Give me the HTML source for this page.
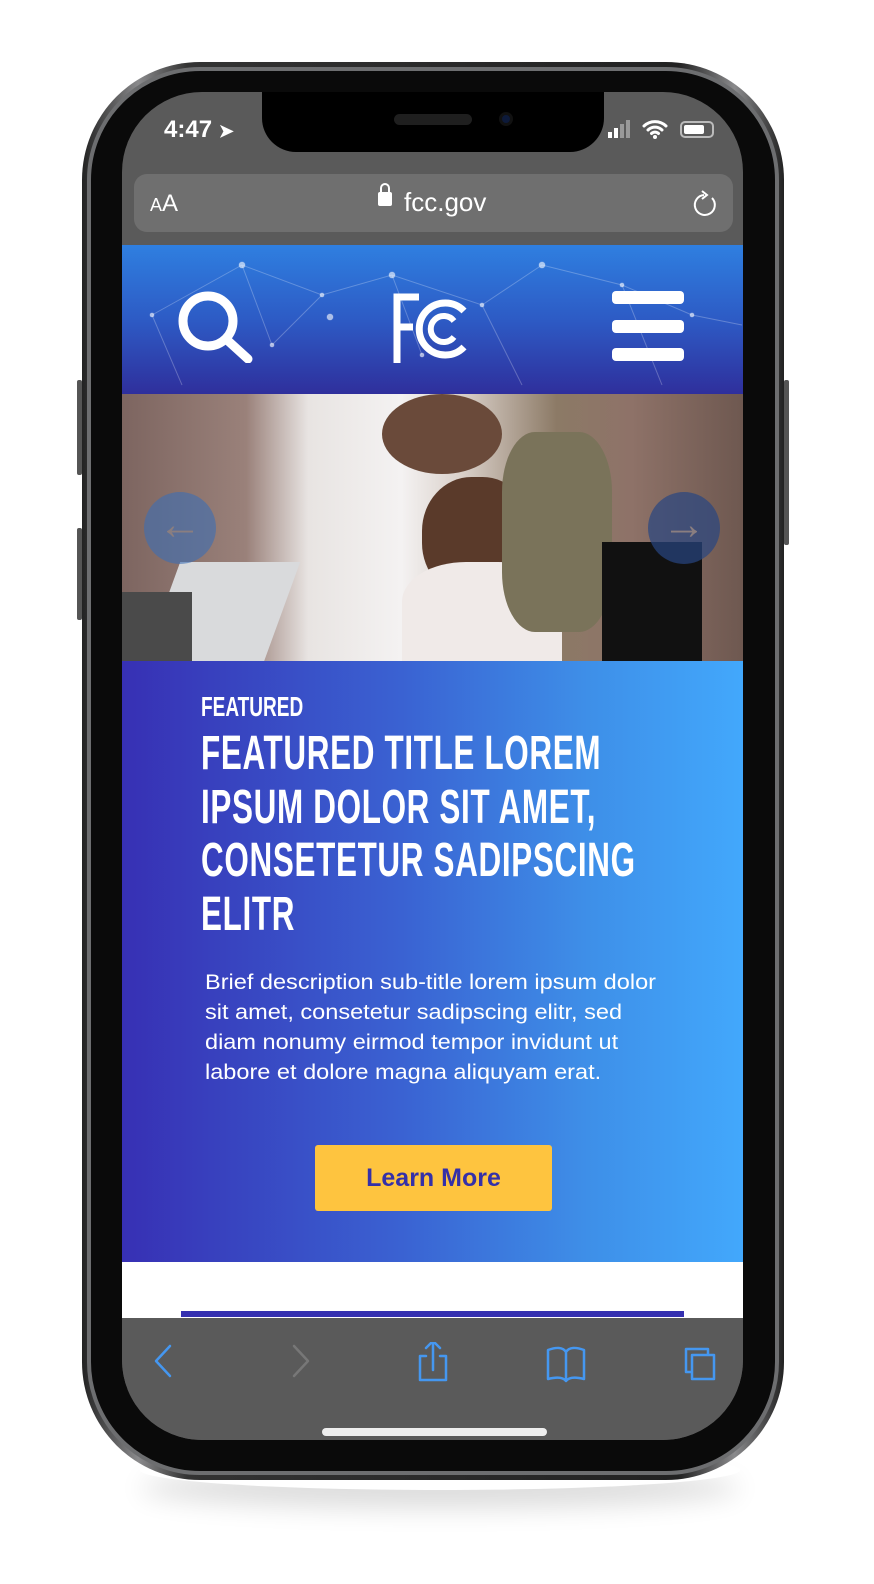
<!DOCTYPE html>
<html><head><meta charset="utf-8"><style>
*{margin:0;padding:0;box-sizing:border-box}
body{width:874px;height:1584px;background:#fff;position:relative;overflow:hidden;font-family:"Liberation Sans",sans-serif}
.shadow{position:absolute;left:140px;top:1450px;width:600px;height:40px;border-radius:50%;box-shadow:0 18px 26px rgba(0,0,0,.14)}
.frame{position:absolute;left:82px;top:62px;width:702px;height:1418px;border-radius:118px;background:linear-gradient(90deg,#222,#8a8a8c 8%,#333 15%,#222 85%,#8a8a8c 93%,#222);padding:5px}
.frame2{width:100%;height:100%;border-radius:113px;background:#0a0a0a;border:4px solid #6d6e70}
.btn{position:absolute;background:#555;width:5px;border-radius:2px}
.screen{position:absolute;left:122px;top:92px;width:621px;height:1348px;border-radius:80px;overflow:hidden;background:#5a5a5a}
.abs{position:absolute}
.cond{font-family:"Liberation Sans",sans-serif;font-weight:bold;white-space:nowrap;transform-origin:left top;color:#fff}
</style></head><body>
<div class="shadow"></div>
<div class="btn" style="left:77px;top:380px;height:95px"></div>
<div class="btn" style="left:77px;top:528px;height:92px"></div>
<div class="btn" style="left:784px;top:380px;height:165px"></div>
<div class="frame"><div class="frame2"></div></div>
<div class="screen">
  <div class="abs" style="left:140px;top:-10px;width:342px;height:70px;background:#000;border-radius:0 0 34px 34px"></div>
  <div class="abs" style="left:272px;top:22px;width:78px;height:11px;background:#1f1f1f;border-radius:6px"></div>
  <div class="abs" style="left:377px;top:20px;width:14px;height:14px;background:#0d1a3a;border-radius:50%;border:3px solid #111"></div>
  <div class="abs" style="left:42px;top:24px;color:#fff;font-size:24px;font-weight:bold">4:47 <span style="font-size:18px">➤</span></div>
  <div class="abs" style="left:486px;top:40px;width:4px;height:6px;background:#fff"></div>
  <div class="abs" style="left:492px;top:36px;width:4px;height:10px;background:#fff"></div>
  <div class="abs" style="left:498px;top:32px;width:4px;height:14px;background:#999"></div>
  <div class="abs" style="left:504px;top:28px;width:4px;height:18px;background:#999"></div>
  <svg class="abs" style="left:520px;top:26px" width="26" height="22" viewBox="0 0 26 22"><path d="M2 8a16 16 0 0 1 22 0M6 12a10 10 0 0 1 14 0M9.5 15.5a5 5 0 0 1 7 0" stroke="#fff" stroke-width="3" fill="none" stroke-linecap="round"/><circle cx="13" cy="19" r="2" fill="#fff"/></svg>
  <div class="abs" style="left:558px;top:29px;width:34px;height:17px;border:2px solid #bbb;border-radius:5px;padding:2px"><div style="width:20px;height:9px;background:#fff;border-radius:2px"></div></div>
  <div class="abs" style="left:12px;top:82px;width:599px;height:58px;background:#6f6f6f;border-radius:13px"></div>
  <div class="abs" style="left:28px;top:98px;color:#fff"><span style="font-size:18px">A</span><span style="font-size:24px">A</span></div>
  <div class="abs" style="left:256px;top:100px;width:14px;height:14px;background:#fff;border-radius:2px"></div>
  <div class="abs" style="left:258px;top:91px;width:10px;height:12px;border:2.5px solid #fff;border-radius:5px 5px 0 0"></div>
  <div class="abs" style="left:282px;top:95px;color:#fff;font-size:26px">fcc.gov</div>
  <svg class="abs" style="left:570px;top:96px" width="28" height="30" viewBox="0 0 28 30"><path d="M20 10a10 10 0 1 1-8-3" stroke="#fff" stroke-width="2" fill="none"/><path d="M10 3l5 4-5 4" stroke="#fff" stroke-width="2" fill="none"/></svg>
  <div class="abs" style="left:0;top:153px;width:621px;height:149px;background:linear-gradient(180deg,#2f7fe0 0%,#2d5bc5 50%,#2f2f9c 100%)">
    <svg width="621" height="149" style="position:absolute;left:0;top:0" stroke="rgba(255,255,255,.25)" stroke-width="1" fill="rgba(255,255,255,.6)">
      <path d="M30 70L120 20 200 50 270 30 360 60 420 20 500 40 570 70 620 80M120 20L150 100 200 50M360 60L400 140M270 30L300 110M500 40L540 140M30 70L60 140" fill="none"/>
      <circle cx="120" cy="20" r="3"/><circle cx="200" cy="50" r="2"/><circle cx="270" cy="30" r="3"/><circle cx="360" cy="60" r="2"/><circle cx="420" cy="20" r="3"/><circle cx="500" cy="40" r="2"/><circle cx="570" cy="70" r="2"/><circle cx="150" cy="100" r="2"/><circle cx="300" cy="110" r="2"/><circle cx="30" cy="70" r="2"/><circle cx="208" cy="72" r="3"/>
    </svg>
    <svg class="abs" style="left:56px;top:46px" width="78" height="72" viewBox="0 0 78 72"><circle cx="30" cy="30" r="25" stroke="#fff" stroke-width="9" fill="none"/><path d="M48 48L70 68" stroke="#fff" stroke-width="9" stroke-linecap="round"/></svg>
    <svg class="abs" style="left:270px;top:48px" width="82" height="72" viewBox="0 0 82 72"><path d="M5 70V4h22M5 34h16" stroke="#fff" stroke-width="7" fill="none"/><path d="M72 18a26 26 0 1 0 0 36" stroke="#fff" stroke-width="7" fill="none"/><path d="M62 28a13 13 0 1 0 0 16" stroke="#fff" stroke-width="6" fill="none"/></svg>
    <div class="abs" style="left:490px;top:46px;width:72px;height:13px;background:#fff;border-radius:4px"></div>
    <div class="abs" style="left:490px;top:75px;width:72px;height:13px;background:#fff;border-radius:4px"></div>
    <div class="abs" style="left:490px;top:103px;width:72px;height:13px;background:#fff;border-radius:4px"></div>
  </div>
  <div class="abs" style="left:0;top:302px;width:621px;height:267px;background:linear-gradient(90deg,#7d6560 0%,#9a817a 20%,#e8e4e2 30%,#f4f2f2 45%,#d9cfc8 55%,#8c7a66 70%,#8e7268 82%,#6e5850 100%)"></div>
  <div class="abs" style="left:260px;top:302px;width:120px;height:80px;background:#6a4a3a;border-radius:50%"></div>
  <div class="abs" style="left:300px;top:385px;width:110px;height:120px;background:#5a3a2a;border-radius:45%"></div>
  <div class="abs" style="left:280px;top:470px;width:160px;height:99px;background:#f0eae8;border-radius:40% 40% 0 0"></div>
  <div class="abs" style="left:380px;top:340px;width:110px;height:200px;background:#7a735a;border-radius:30%"></div>
  <div class="abs" style="left:40px;top:470px;width:120px;height:100px;background:#d9dadc;transform:skewX(-20deg)"></div>
  <div class="abs" style="left:0;top:500px;width:70px;height:69px;background:#4a4a4a"></div>
  <div class="abs" style="left:480px;top:450px;width:100px;height:119px;background:#111"></div>
  <div class="abs" style="left:22px;top:400px;width:72px;height:72px;border-radius:50%;background:rgba(60,110,180,.6);color:#8a7e80;font-size:44px;text-align:center;line-height:66px">←</div>
  <div class="abs" style="left:526px;top:400px;width:72px;height:72px;border-radius:50%;background:rgba(40,70,130,.7);color:#8a7e80;font-size:44px;text-align:center;line-height:66px">→</div>
  <div class="abs" style="left:0;top:569px;width:621px;height:601px;background:linear-gradient(90deg,#3730b4 0%,#3a62d2 45%,#3e8fe8 75%,#42a8fc 100%)">
    <div class="abs cond" style="left:79px;top:30px;font-size:28px;transform:scaleX(.68)">FEATURED</div>
    <div class="abs cond" style="left:79px;top:66px;font-size:48px;line-height:53.5px;transform:scaleX(.655);letter-spacing:1px">FEATURED TITLE LOREM<br>IPSUM DOLOR SIT AMET,<br>CONSETETUR SADIPSCING<br>ELITR</div>
    <div class="abs" style="left:83px;top:307px;color:#fff;font-size:21px;line-height:30px;white-space:nowrap;transform:scaleX(1.12);transform-origin:left top">Brief description sub-title lorem ipsum dolor<br>sit amet, consetetur sadipscing elitr, sed<br>diam nonumy eirmod tempor invidunt ut<br>labore et dolore magna aliquyam erat.</div>
    <div class="abs" style="left:193px;top:484px;width:237px;height:66px;background:#fec43f;border-radius:3px;color:#3530a8;font-weight:bold;font-size:25px;text-align:center;line-height:66px">Learn More</div>
  </div>
  <div class="abs" style="left:0;top:1170px;width:621px;height:56px;background:#fff"></div>
  <div class="abs" style="left:59px;top:1219px;width:503px;height:6px;background:#3530b0"></div>
  <div class="abs" style="left:0;top:1226px;width:621px;height:122px;background:#5a5a5a"></div>
  <svg class="abs" style="left:0;top:1250px" width="621" height="60" viewBox="0 0 621 60" fill="none" stroke="#4597f0" stroke-width="2.5" stroke-linecap="round" stroke-linejoin="round">
    <path d="M48 4L34 19l14 15"/>
    <path d="M172 4l14 15-14 15" stroke="#777"/>
    <path d="M304 14h-6v24h26V14h-6M311 28V0M304 6l7-7 7 7"/>
    <path d="M426 37V8c8-3 15-3 18 2 3-5 10-5 18-2v29c-8-2-15-2-18 2-3-4-10-4-18-2zM444 10v29"/>
    <path d="M570 30h-6V7h22v6M570 13h22v24h-22z"/>
  </svg>
  <div class="abs" style="left:200px;top:1336px;width:225px;height:8px;background:#eee;border-radius:4px"></div>
</div>
</body></html>
